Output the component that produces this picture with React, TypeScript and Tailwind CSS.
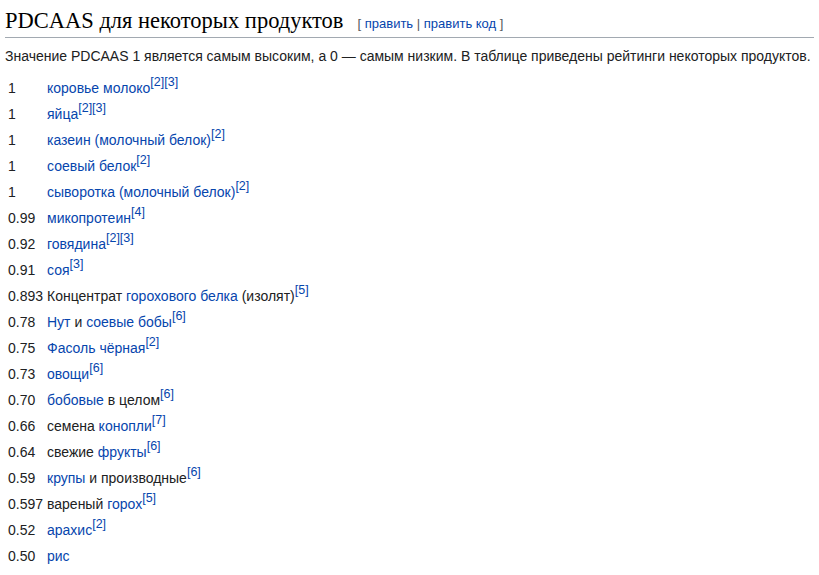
import React from "react";

type Part = { t: string; link?: boolean };
type Row = { v: string; parts: Part[]; refs: string[] };

const rows: Row[] = [
  { v: "1", parts: [{ t: "коровье молоко", link: true }], refs: ["2", "3"] },
  { v: "1", parts: [{ t: "яйца", link: true }], refs: ["2", "3"] },
  { v: "1", parts: [{ t: "казеин (молочный белок)", link: true }], refs: ["2"] },
  { v: "1", parts: [{ t: "соевый белок", link: true }], refs: ["2"] },
  { v: "1", parts: [{ t: "сыворотка (молочный белок)", link: true }], refs: ["2"] },
  { v: "0.99", parts: [{ t: "микопротеин", link: true }], refs: ["4"] },
  { v: "0.92", parts: [{ t: "говядина", link: true }], refs: ["2", "3"] },
  { v: "0.91", parts: [{ t: "соя", link: true }], refs: ["3"] },
  {
    v: "0.893",
    parts: [{ t: "Концентрат " }, { t: "горохового белка", link: true }, { t: " (изолят)" }],
    refs: ["5"],
  },
  { v: "0.78", parts: [{ t: "Нут", link: true }, { t: " и " }, { t: "соевые бобы", link: true }], refs: ["6"] },
  { v: "0.75", parts: [{ t: "Фасоль чёрная", link: true }], refs: ["2"] },
  { v: "0.73", parts: [{ t: "овощи", link: true }], refs: ["6"] },
  { v: "0.70", parts: [{ t: "бобовые", link: true }, { t: " в целом" }], refs: ["6"] },
  { v: "0.66", parts: [{ t: "семена " }, { t: "конопли", link: true }], refs: ["7"] },
  { v: "0.64", parts: [{ t: "свежие " }, { t: "фрукты", link: true }], refs: ["6"] },
  { v: "0.59", parts: [{ t: "крупы", link: true }, { t: " и производные" }], refs: ["6"] },
  { v: "0.597", parts: [{ t: "вареный " }, { t: "горох", link: true }], refs: ["5"] },
  { v: "0.52", parts: [{ t: "арахис", link: true }], refs: ["2"] },
  { v: "0.50", parts: [{ t: "рис", link: true }], refs: [] },
];

export default function App() {
  return (
    <div
      className="bg-white px-[5px] text-[14px] text-[#202122] min-h-[575px]"
      style={{ fontFamily: '"Liberation Sans", Arial, sans-serif' }}
    >
      <div className="flex items-baseline border-b border-[#a2a9b1] pt-[7px] pb-[3px]">
        <h2
          className="text-[22.5px] leading-[27px] text-black font-normal"
          style={{ fontFamily: '"Liberation Serif", "Times New Roman", serif' }}
        >
          PDCAAS для некоторых продуктов
        </h2>
        <span className="ml-[14px] text-[13px] text-[#54595d]">
          [ <span className="text-[#0645ad]">править</span> |{" "}
          <span className="text-[#0645ad]">править код</span> ]
        </span>
      </div>
      <p className="mt-[7px] leading-[22px]">
        Значение PDCAAS 1 является самым высоким, а 0 — самым низким. В таблице приведены рейтинги некоторых продуктов.
      </p>
      <div className="mt-[8px] flex flex-col">
        {rows.map((r, i) => (
          <div key={i} className="flex h-[26px] items-center">
            <div className="w-[42px] shrink-0 pl-[3px]">{r.v}</div>
            <div className="whitespace-nowrap">
              {r.parts.map((p, j) => (
                <span key={j} className={p.link ? "text-[#0645ad]" : ""}>
                  {p.t}
                </span>
              ))}
              {r.refs.length > 0 && (
                <sup className="text-[12.5px] leading-none text-[#0645ad] align-super relative -top-[1px]">
                  {r.refs.map((x) => `[${x}]`).join("")}
                </sup>
              )}
            </div>
          </div>
        ))}
      </div>
    </div>
  );
}
